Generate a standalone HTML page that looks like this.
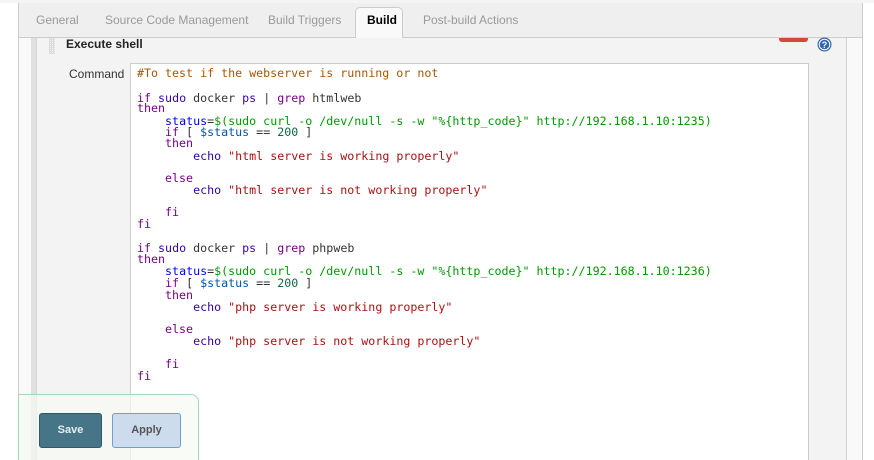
<!DOCTYPE html>
<html style="width:874px;height:460px;overflow:hidden"><head><style>
*{margin:0;padding:0;box-sizing:border-box}
body{width:874px;height:460px;overflow:hidden;background:#fff;font-family:"Liberation Sans",sans-serif;position:relative}
.a{position:absolute}
.tab{position:absolute;top:13px;font-size:12px;color:#999}
.code{position:absolute;left:137px;font-family:"DejaVu Sans Mono",monospace;font-size:11.65px;line-height:14px;white-space:pre;color:#333}
.k{color:#770088}.b{color:#3300aa}.v{color:#0000ff}.g{color:#009900}.s{color:#aa1111}.n{color:#116644}.c{color:#aa5500}.d{color:#0055aa}
</style></head><body>
<div class="a" style="left:0;top:0;width:874px;height:3px;background:#f4f4f4"></div>
<div class="a" style="left:18px;top:3px;width:845px;height:457px;border-left:1px solid #ccc;border-right:1px solid #ccc;background:#f9f9f9"></div>
<div class="a" style="left:19px;top:3px;width:843px;height:35px;background:#efefef;border-bottom:1px solid #ccc"></div>
<div class="tab" style="left:36px">General</div>
<div class="tab" style="left:105px">Source Code Management</div>
<div class="tab" style="left:268px">Build Triggers</div>
<div class="a" style="left:355px;top:7px;width:48px;height:32px;background:#f9f9f9;border:1px solid #ccc;border-bottom:none;border-radius:5px 5px 0 0"></div>
<div class="tab" style="left:367px;color:#000;font-weight:bold">Build</div>
<div class="tab" style="left:423px">Post-build Actions</div>
<div class="a" style="left:31px;top:38px;width:5px;height:422px;background:#e0e0e0"></div>
<div class="a" style="left:36px;top:38px;width:811px;height:422px;background:#f3f3f3;border-left:1px solid #d4d4d4;border-right:1px solid #d4d4d4"></div>
<div class="a" style="left:49px;top:38px;width:6px;height:16px;background:repeating-linear-gradient(90deg,#ccc 0 1px,transparent 1px 2px),repeating-linear-gradient(0deg,#ccc 0 1px,transparent 1px 2px);opacity:.6"></div>
<div class="a" style="left:66px;top:37px;font-size:12px;font-weight:bold;color:#222">Execute shell</div>
<div class="a" style="left:779px;top:38px;width:29px;height:4px;background:#d24939;border-radius:0 0 3px 3px"></div>
<svg class="a" style="left:817px;top:37px" width="15" height="15" viewBox="0 0 15 15"><circle cx="7.5" cy="7.5" r="7" fill="#3366aa"/><circle cx="7.5" cy="7.5" r="5.3" fill="none" stroke="#fff" stroke-width="1"/><text x="7.5" y="11" font-size="9" font-weight="bold" fill="#fff" text-anchor="middle" font-family="Liberation Sans">?</text></svg>
<div class="a" style="left:69px;top:67px;font-size:12px;color:#333">Command</div>
<div class="a" style="left:130px;top:63px;width:679px;height:397px;background:#fff;border:1px solid #ccc;border-bottom:none"></div>
<div class="code c" style="top:66px">#To test if the webserver is running or not</div>
<div class="code" style="top:91px"><span class="k">if</span> <span class="b">sudo</span> docker <span class="b">ps</span> | <span class="k">grep</span> htmlweb</div>
<div class="code k" style="top:101px">then</div>
<div class="code" style="top:114px">    <span class="v">status</span>=<span class="g">$(sudo curl -o /dev/null -s -w "%{http_code}" http://192.168.1.10:1235)</span></div>
<div class="code" style="top:125px">    <span class="k">if</span> [ <span class="d">$status</span> == <span class="n">200</span> ]</div>
<div class="code k" style="top:136px">    then</div>
<div class="code" style="top:149px">        <span class="b">echo</span> <span class="s">"html server is working properly"</span></div>
<div class="code k" style="top:171px">    else</div>
<div class="code" style="top:183px">        <span class="b">echo</span> <span class="s">"html server is not working properly"</span></div>
<div class="code k" style="top:205px">    fi</div>
<div class="code k" style="top:217px">fi</div>
<div class="code" style="top:241px"><span class="k">if</span> <span class="b">sudo</span> docker <span class="b">ps</span> | <span class="k">grep</span> phpweb</div>
<div class="code k" style="top:252px">then</div>
<div class="code" style="top:264px">    <span class="v">status</span>=<span class="g">$(sudo curl -o /dev/null -s -w "%{http_code}" http://192.168.1.10:1236)</span></div>
<div class="code" style="top:276px">    <span class="k">if</span> [ <span class="d">$status</span> == <span class="n">200</span> ]</div>
<div class="code k" style="top:288px">    then</div>
<div class="code" style="top:300px">        <span class="b">echo</span> <span class="s">"php server is working properly"</span></div>
<div class="code k" style="top:322px">    else</div>
<div class="code" style="top:334px">        <span class="b">echo</span> <span class="s">"php server is not working properly"</span></div>
<div class="code k" style="top:357px">    fi</div>
<div class="code k" style="top:369px">fi</div>
<div class="a" style="left:18px;top:394px;width:181px;height:66px;background:rgba(245,249,242,.7);border:1px solid #a9d5bb;border-bottom:none;border-radius:0 8px 0 0"></div>
<div class="a" style="left:39px;top:413px;width:63px;height:35px;background:#467587;border:1px solid #2f5868;border-radius:3px;color:#e8eef0;font-size:11px;font-weight:bold;text-align:center;line-height:33px">Save</div>
<div class="a" style="left:112px;top:413px;width:69px;height:35px;background:#cddcec;border:1px solid #6f9fd0;border-radius:3px;color:#555;font-size:11px;font-weight:bold;text-align:center;line-height:33px">Apply</div>
</body></html>
